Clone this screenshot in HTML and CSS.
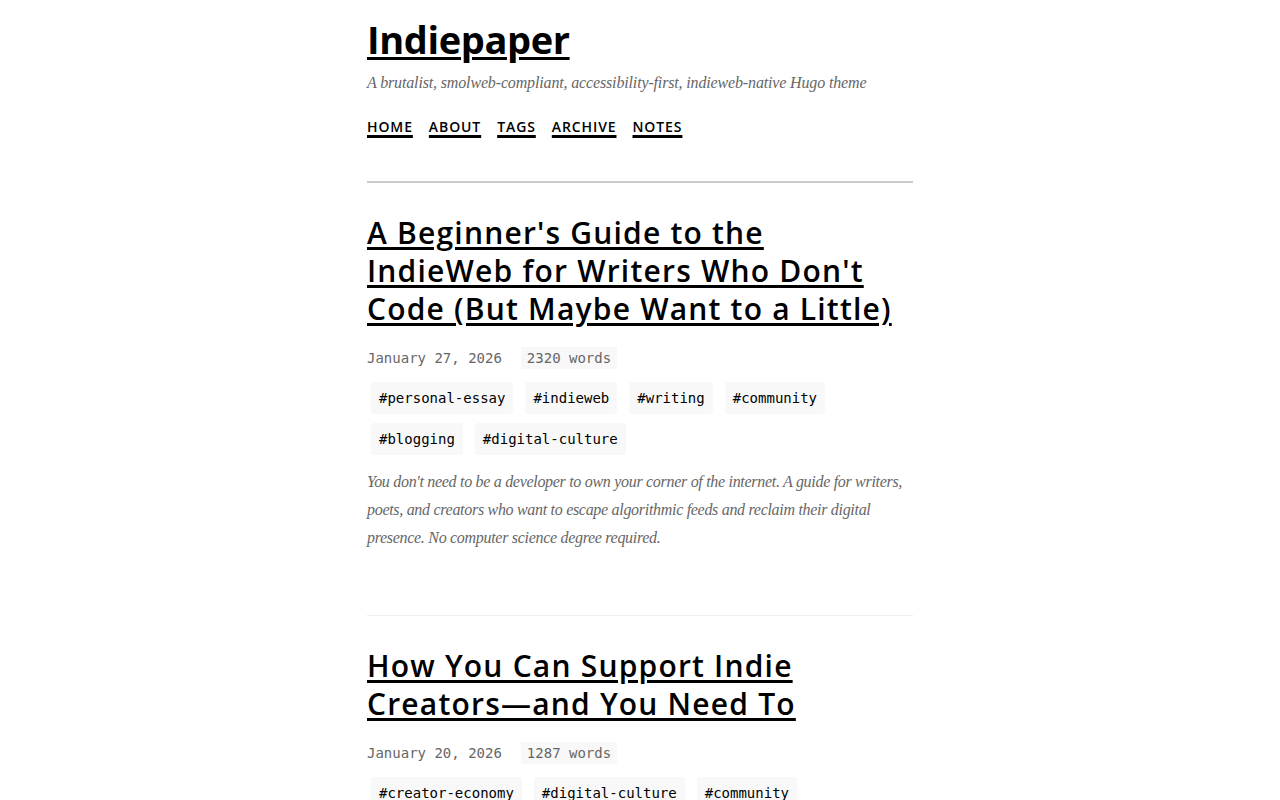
FILE: index.html
```html
<!DOCTYPE html>
<html lang="en">
<head>
<meta charset="utf-8">
<title>Indiepaper</title>
<link rel="stylesheet" href="styles.css">
</head>
<body>
<div class="page">
  <header class="site-header">
    <h1 class="site-title"><a href="#">Indiepaper</a></h1>
    <p class="tagline">A brutalist, smolweb-compliant, accessibility-first, indieweb-native Hugo theme</p>
    <nav class="nav">
      <a href="#">HOME</a>
      <a href="#">ABOUT</a>
      <a href="#">TAGS</a>
      <a href="#">ARCHIVE</a>
      <a href="#">NOTES</a>
    </nav>
  </header>
  <main class="posts">
    <article class="post">
      <h2 class="post-title"><a href="#">A Beginner's Guide to the IndieWeb for Writers Who Don't Code (But Maybe Want to a Little)</a></h2>
      <div class="meta">
        <span class="date">January 27, 2026</span>
        <span class="words">2320 words</span>
      </div>
      <div class="tags">
        <a class="tag" href="#">#personal-essay</a>
        <a class="tag" href="#">#indieweb</a>
        <a class="tag" href="#">#writing</a>
        <a class="tag" href="#">#community</a>
        <a class="tag" href="#">#blogging</a>
        <a class="tag" href="#">#digital-culture</a>
      </div>
      <p class="excerpt">You don't need to be a developer to own your corner of the internet. A guide for writers, poets, and creators who want to escape algorithmic feeds and reclaim their digital presence. No computer science degree required.</p>
    </article>
    <article class="post">
      <h2 class="post-title"><a href="#">How You Can Support Indie Creators—and You Need To</a></h2>
      <div class="meta">
        <span class="date">January 20, 2026</span>
        <span class="words">1287 words</span>
      </div>
      <div class="tags">
        <a class="tag" href="#">#creator-economy</a>
        <a class="tag" href="#">#digital-culture</a>
        <a class="tag" href="#">#community</a>
      </div>
    </article>
  </main>
</div>
</body>
</html>
```
FILE: styles.css
```css
html, body {
  margin: 0;
  padding: 0;
  background: #fff;
  color: #000;
}
body {
  font-family: "Open Sans", "Noto Sans", sans-serif;
}
.page {
  width: 546px;
  margin: 0 auto;
}
a {
  color: #000;
}
.site-header {
  padding-top: 15px;
  padding-bottom: 44px;
  border-bottom: 2px solid #ccc;
}
.site-title {
  margin: 0;
  font-size: 38px;
  line-height: 48px;
  font-weight: 700;
  letter-spacing: -0.01em;
}
.site-title a {
  text-decoration-thickness: 3px;
  text-underline-offset: 3px;
}
.tagline {
  margin: 8px 0 0;
  font-family: "Liberation Serif", serif;
  font-style: italic;
  font-size: 16px;
  letter-spacing: -0.15px;
  line-height: 24px;
  color: #666;
}
.nav {
  display: flex;
  gap: 16px;
  margin-top: 22px;
}
.nav a {
  font-size: 14px;
  line-height: 20px;
  font-weight: 600;
  letter-spacing: 0.9px;
  text-decoration-thickness: 3px;
  text-underline-offset: 3px;
}
.post {
  padding-top: 31px;
  padding-bottom: 63px;
  border-bottom: 1px solid #eee;
}
.post-title {
  margin: 0;
  font-size: 30px;
  line-height: 38px;
  font-weight: 600;
  letter-spacing: 1.2px;
}
.post-title a {
  text-decoration-thickness: 3px;
  text-underline-offset: 3px;
}
.meta {
  display: flex;
  align-items: center;
  gap: 19px;
  margin-top: 19px;
  font-family: "DejaVu Sans Mono", monospace;
  font-size: 14px;
  line-height: 22px;
  color: #666;
}
.words {
  background: #f8f8f8;
  padding: 0 6px;
}
.tags {
  display: flex;
  flex-wrap: wrap;
  column-gap: 12px;
  row-gap: 9px;
  margin-top: 13px;
  padding-left: 4px;
}
.tag {
  font-family: "DejaVu Sans Mono", monospace;
  font-size: 14px;
  line-height: 32px;
  padding: 0 8px;
  background: #f8f8f8;
  border-radius: 3px;
  text-decoration: none;
  color: #000;
}
.excerpt {
  margin: 13px 0 0;
  font-family: "Liberation Serif", serif;
  font-style: italic;
  font-size: 16px;
  letter-spacing: -0.3px;
  line-height: 28px;
  color: #666;
}
```
